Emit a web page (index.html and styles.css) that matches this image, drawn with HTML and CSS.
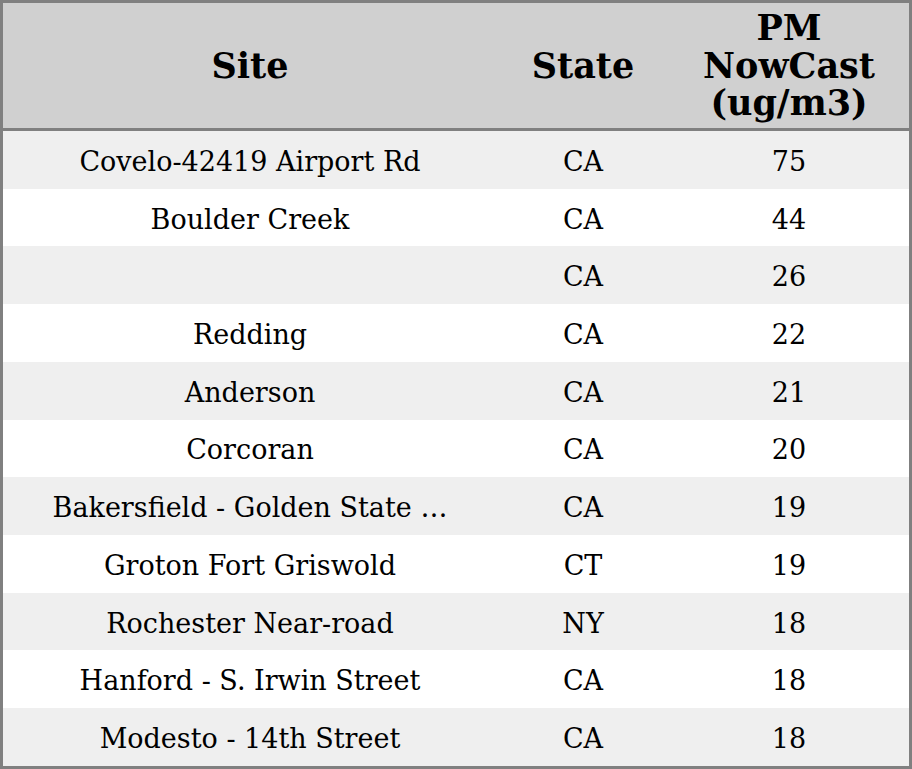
FILE: index.html
```html
<!DOCTYPE html>
<html>
<head>
<meta charset="utf-8">
<link rel="stylesheet" href="styles.css">
</head>
<body>
<table class="aq">
  <colgroup>
    <col class="c-site">
    <col class="c-state">
    <col class="c-pm">
  </colgroup>
  <thead>
    <tr class="head">
      <th>Site</th>
      <th>State</th>
      <th>PM<br>NowCast<br>(ug/m3)</th>
    </tr>
  </thead>
  <tbody>
    <tr><td>Covelo-42419 Airport Rd</td><td>CA</td><td>75</td></tr>
    <tr><td>Boulder Creek</td><td>CA</td><td>44</td></tr>
    <tr><td></td><td>CA</td><td>26</td></tr>
    <tr><td>Redding</td><td>CA</td><td>22</td></tr>
    <tr><td>Anderson</td><td>CA</td><td>21</td></tr>
    <tr><td>Corcoran</td><td>CA</td><td>20</td></tr>
    <tr><td>Bakersfield - Golden State …</td><td>CA</td><td>19</td></tr>
    <tr><td>Groton Fort Griswold</td><td>CT</td><td>19</td></tr>
    <tr><td>Rochester Near-road</td><td>NY</td><td>18</td></tr>
    <tr><td>Hanford - S. Irwin Street</td><td>CA</td><td>18</td></tr>
    <tr><td>Modesto - 14th Street</td><td>CA</td><td>18</td></tr>
  </tbody>
</table>
</body>
</html>
```

FILE: styles.css
```css
html, body {
  margin: 0;
  padding: 0;
  background: #ffffff;
}

.aq {
  width: 912px;
  height: 769px;
  border: 3px solid #808080;
  border-collapse: separate;
  border-spacing: 0;
  table-layout: fixed;
  font-family: "DejaVu Serif", serif;
  color: #000;
  box-sizing: border-box;
}

.c-site { width: 494px; }
.c-state { width: 172px; }
.c-pm { width: 240px; }

.aq th {
  background: #d0d0d0;
  font-size: 35px;
  font-weight: bold;
  line-height: 37.5px;
  text-align: center;
  vertical-align: middle;
  padding: 0;
  border-bottom: 3px solid #808080;
}

.head { height: 128px; }

.aq td {
  font-size: 27px;
  text-align: center;
  vertical-align: middle;
  padding: 3px 0 0 0;
  white-space: nowrap;
  overflow: hidden;
}

.aq tbody tr { height: 57.7px; }

.aq tbody tr:nth-child(odd) td { background: #efefef; }
.aq tbody tr:nth-child(even) td { background: #ffffff; }
```
